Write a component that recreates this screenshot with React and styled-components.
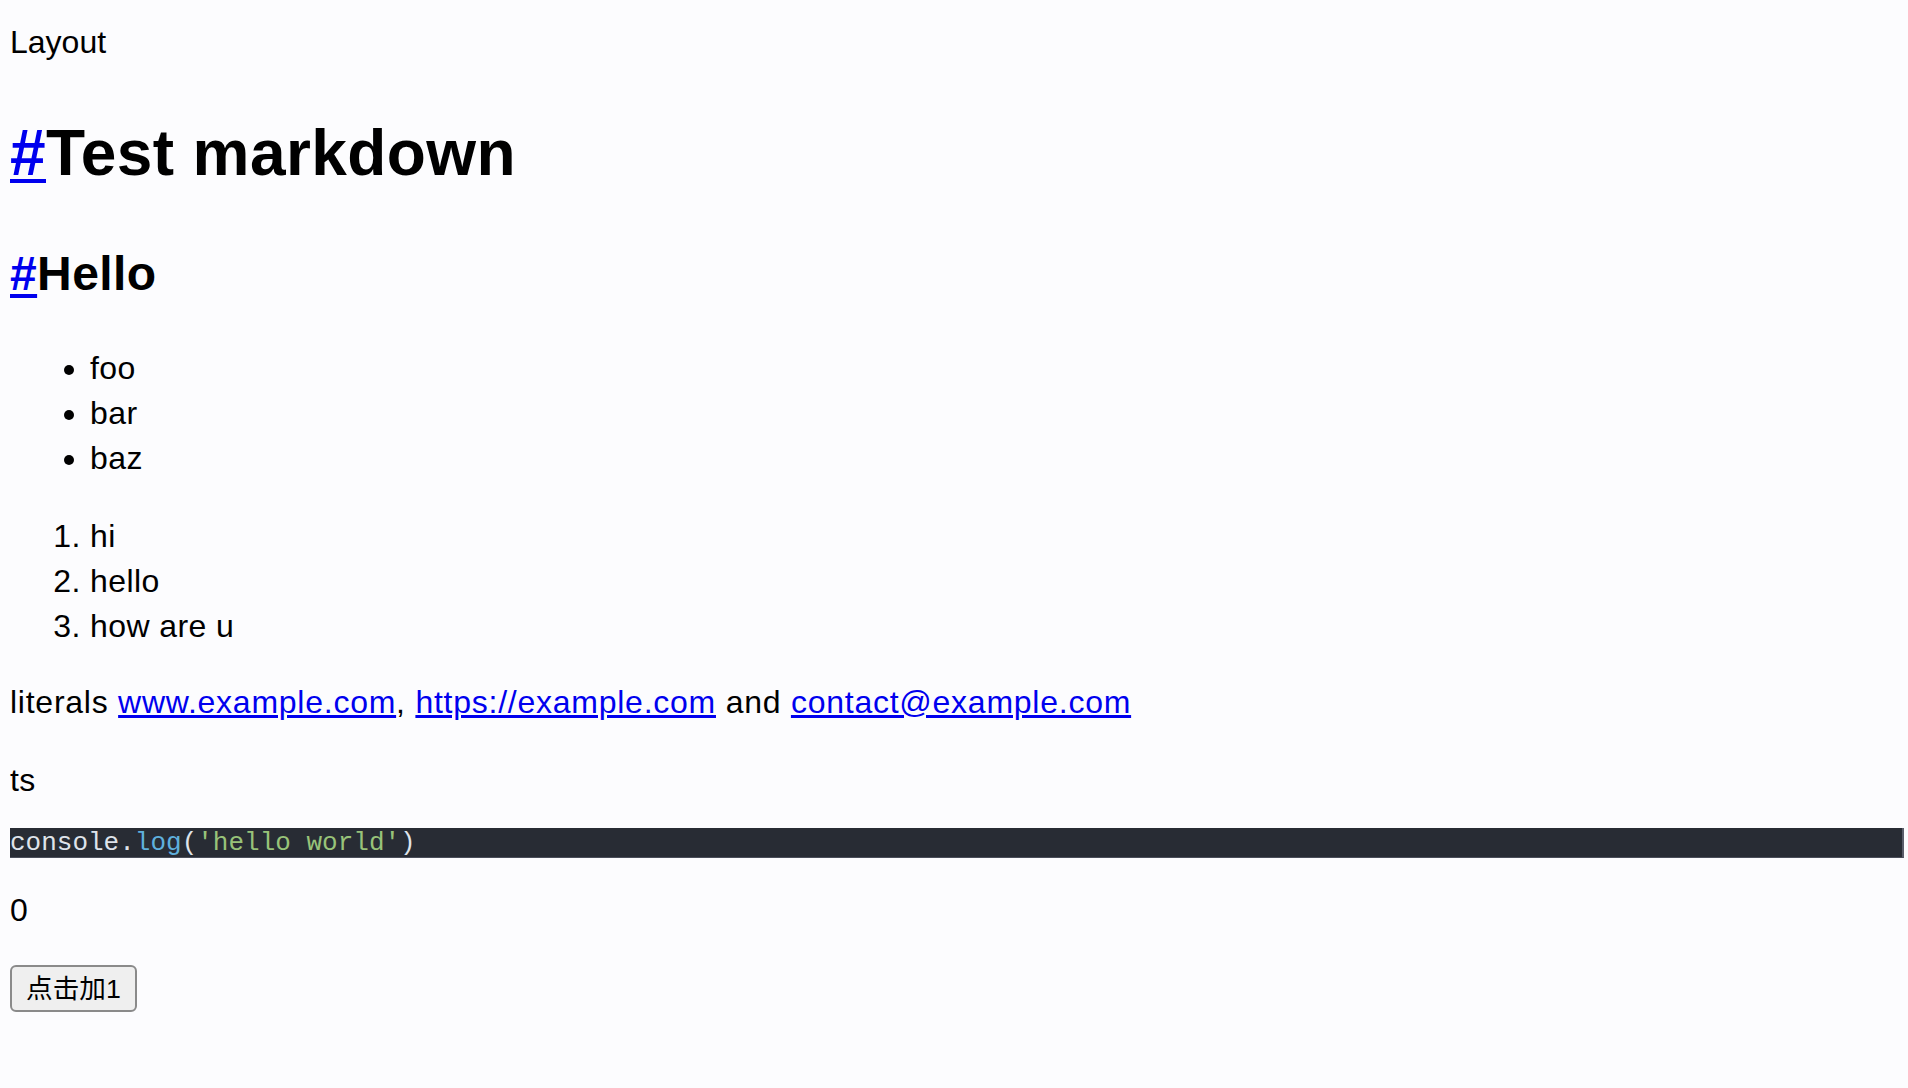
import React, { useState } from 'react'
import styled, { createGlobalStyle } from 'styled-components'

const GlobalStyle = createGlobalStyle`
  html, body {
    margin: 0;
    background: #fcfcfe;
  }
  body {
    font-family: "Liberation Sans", Arial, "Noto Sans CJK SC", sans-serif;
    color: #000;
  }
`

const Page = styled.div`
  padding: 20px 4px 0 10px;
  font-size: 32px;
  line-height: 1.4;
  letter-spacing: 0.4px;
`

const Header = styled.div`
  line-height: 44.8px;
  letter-spacing: 0;
`

const Heading1 = styled.h1`
  font-size: 64px;
  line-height: 1.4;
  font-weight: 700;
  margin: 44px 0 42px;
`

const Heading2 = styled.h2`
  font-size: 48px;
  line-height: 1.4;
  font-weight: 700;
  margin: 42px 0 38px;
`

const Anchor = styled.a`
  color: #0000ee;
  text-decoration: underline;
  text-decoration-thickness: ${p => (p.$thick ? '4px' : 'auto')};
  text-underline-offset: ${p => (p.$thick ? '4px' : 'auto')};
`

const List = styled.ul`
  margin: 0 0 33.5px;
  padding-left: 80px;
  line-height: 45px;
`

const NumList = styled.ol`
  margin: 33.5px 0 31px;
  padding-left: 80px;
  line-height: 45px;
`

const Para = styled.p`
  margin: 31px 0 32px;
  line-height: 44.8px;
  letter-spacing: ${p => (p.$wide ? '0.75px' : 'inherit')};
`

const LangLabel = styled(Para)`
  margin-top: 33px;
  margin-bottom: 25px;
`

const Pre = styled.pre`
  margin: 25px 0 30.5px;
  background: #282c34;
  color: #dfe3ea;
  font-family: "Liberation Mono", "Courier New", monospace;
  font-size: 26px;
  line-height: 30px;
  letter-spacing: 0;
  border-bottom: 1px solid #4a4e5a;
  border-right: 2px solid #5a5e6a;
  height: 29px;
  overflow: hidden;

  code {
    font-family: inherit;
    font-size: inherit;
  }
`

const Tok = styled.span`
  color: ${p => (p.$kind === 'fn' ? '#5fb0dd' : p.$kind === 'str' ? '#98c379' : '#dfe3ea')};
`

const Count = styled.div`
  margin: 30.5px 0 32px;
  line-height: 44.8px;
`

const Button = styled.button`
  font-family: "Liberation Sans", "Noto Sans CJK SC", sans-serif;
  font-size: 26.67px;
  line-height: 38px;
  height: 47px;
  padding: 2px 14px;
  border: 2px solid #8a8a8a;
  border-radius: 6px;
  background: #efefef;
  color: #000;
  cursor: pointer;
`

export default function App() {
  const [count, setCount] = useState(0)
  return (
    <>
      <GlobalStyle />
      <Page>
        <Header>Layout</Header>
        <Heading1>
          <Anchor href="#test-markdown" $thick>#</Anchor>Test markdown
        </Heading1>
        <Heading2>
          <Anchor href="#hello" $thick>#</Anchor>Hello
        </Heading2>
        <List>
          <li>foo</li>
          <li>bar</li>
          <li>baz</li>
        </List>
        <NumList>
          <li>hi</li>
          <li>hello</li>
          <li>how are u</li>
        </NumList>
        <Para $wide>
          literals <Anchor href="http://www.example.com">www.example.com</Anchor>,{' '}
          <Anchor href="https://example.com">https://example.com</Anchor> and{' '}
          <Anchor href="mailto:contact@example.com">contact@example.com</Anchor>
        </Para>
        <LangLabel>ts</LangLabel>
        <Pre>
          <code>
            <Tok>console.</Tok>
            <Tok $kind="fn">log</Tok>
            <Tok>(</Tok>
            <Tok $kind="str">'hello world'</Tok>
            <Tok>)</Tok>
          </code>
        </Pre>
        <Count>{count}</Count>
        <Button onClick={() => setCount(c => c + 1)}>点击加1</Button>
      </Page>
    </>
  )
}
